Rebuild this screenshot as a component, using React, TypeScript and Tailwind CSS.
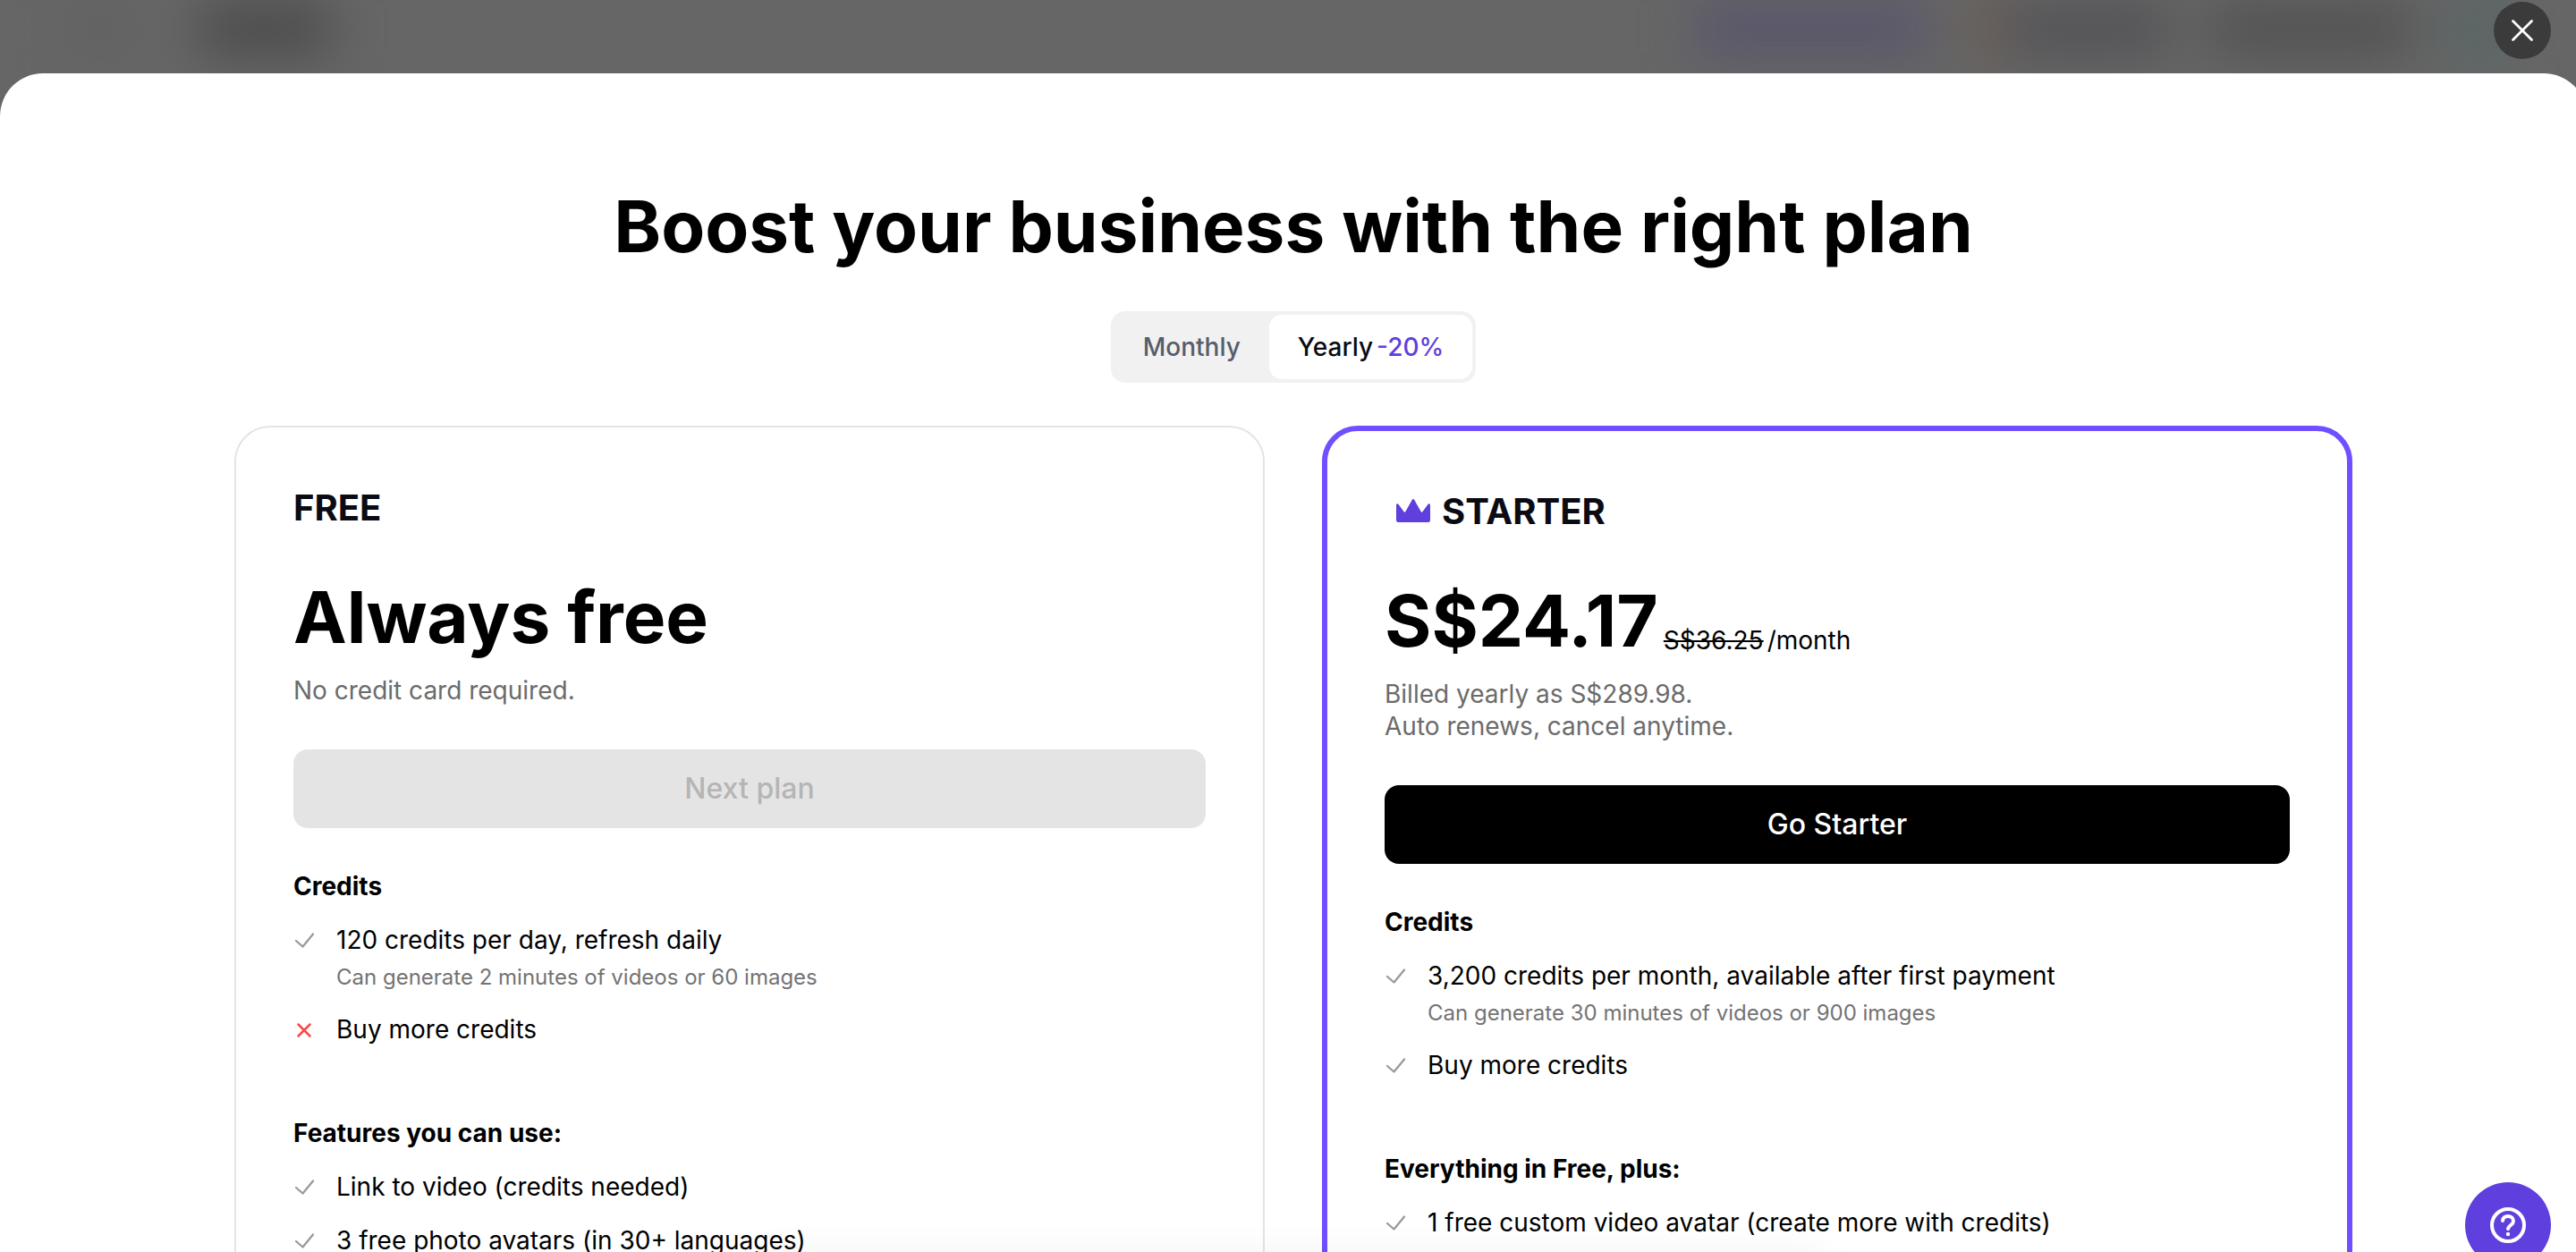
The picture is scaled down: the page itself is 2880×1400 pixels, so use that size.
import React, { useState } from 'react';
import clsx from 'clsx';

interface PlanItem {
    text: string;
    note?: string;
    included: boolean;
}

interface PlanSection {
    title: string;
    items: PlanItem[];
}

const FREE_SECTIONS: PlanSection[] = [
    {
        title: 'Credits',
        items: [
            { text: '120 credits per day, refresh daily', note: 'Can generate 2 minutes of videos or 60 images', included: true },
            { text: 'Buy more credits', included: false },
        ],
    },
    {
        title: 'Features you can use:',
        items: [
            { text: 'Link to video (credits needed)', included: true },
            { text: '3 free photo avatars (in 30+ languages)', included: true },
        ],
    },
];

const STARTER_SECTIONS: PlanSection[] = [
    {
        title: 'Credits',
        items: [
            { text: '3,200 credits per month, available after first payment', note: 'Can generate 30 minutes of videos or 900 images', included: true },
            { text: 'Buy more credits', included: true },
        ],
    },
    {
        title: 'Everything in Free, plus:',
        items: [
            { text: '1 free custom video avatar (create more with credits)', included: true },
        ],
    },
];

const CheckIcon = () => (
    <svg className="mt-1.5 size-6 shrink-0 text-[#999999]" viewBox="0 0 24 24" fill="none" stroke="currentColor" strokeWidth="2.3" strokeLinecap="round" strokeLinejoin="round" aria-hidden="true">
        <path d="M3 13L10.5 19.500L22 5.500" />
    </svg>
);

const CrossIcon = () => (
    <svg className="mt-1.5 size-6 shrink-0 text-[#ff4747]" viewBox="0 0 24 24" fill="none" stroke="currentColor" strokeWidth="2.5" strokeLinecap="round" aria-hidden="true">
        <path d="M5.5 6.500L18.500 19.500M18.500 6.500L5.500 19.500" />
    </svg>
);

const CrownIcon = () => (
    <svg className="size-12 shrink-0 text-[#5f3fdd]" viewBox="0 0 48 48" fill="currentColor" aria-hidden="true">
        <path d="M23 10.6c.5-.9 1.500-.9 2 0l7.600 13.400c.5.9 1.500.9 2 0l5.800-8c.8-1.300 2.600-.8 2.600.8V33.500a2.500 2.500 0 0 1-2.500 2.500h-33a2.500 2.500 0 0 1-2.500-2.500V16.800c0-1.600 1.800-2.100 2.600-.8l5.800 8c.5.9 1.500.9 2 0z" />
    </svg>
);

const SectionList = ({ sections }: { sections: PlanSection[] }) => (
    <div className="mt-[47px] flex flex-col gap-20">
        {sections.map((section) => (
            <section key={section.title}>
                <h3 className="text-[28px] leading-9 font-bold">{section.title}</h3>
                <ul className="mt-6 flex flex-col gap-6">
                    {section.items.map((item) => (
                        <li key={item.text} className="flex gap-6">
                            {item.included ? <CheckIcon /> : <CrossIcon />}
                            <div>
                                <p className="text-[28px] leading-9">{item.text}</p>
                                {item.note && <p className="mt-2 text-2xl leading-8 text-[#737373]">{item.note}</p>}
                            </div>
                        </li>
                    ))}
                </ul>
            </section>
        ))}
    </div>
);

// Whatever is left of the app's top bar behind the backdrop
const BlurredHeader = () => (
    <div className="flex h-16 items-center justify-between px-20 blur-[28px]" aria-hidden="true">
        <div className="flex items-center gap-20">
            <div className="h-12 w-16 bg-[#616161]" />
            <div className="h-14 w-36 bg-[#4a4a4a]" />
        </div>
        <div className="flex items-center gap-12">
            <div className="h-14 w-64 bg-[#58556c]" />
            <div className="flex">
                <div className="h-14 w-12 bg-[#6a5d55]" />
                <div className="h-14 w-44 bg-[#525256]" />
            </div>
            <div className="h-14 w-56 bg-[#515151]" />
            <div className="h-16 w-14 bg-[#566666]" />
        </div>
    </div>
);

const App: React.FC = () => {
    const [billing, setBilling] = useState<'monthly' | 'yearly'>('yearly');

    return (
        <div className="flex h-screen flex-col overflow-hidden bg-[#666666] font-[Inter,'Liberation_Sans',sans-serif] text-black">
            <div className="relative h-[82px] shrink-0">
                <BlurredHeader />
                <button aria-label="Close" className="absolute top-0.5 right-7 flex size-16 items-center justify-center rounded-full bg-[#3b3b3b] text-white">
                    <svg className="size-8" viewBox="0 0 32 32" fill="none" stroke="currentColor" strokeWidth="2.8" strokeLinecap="round" aria-hidden="true">
                        <path d="M5.500 5.500L26.500 26.500M26.500 5.500L5.500 26.500" />
                    </svg>
                </button>
            </div>

            <main role="dialog" aria-labelledby="pricing-title" className="relative -mr-3 flex-1 rounded-t-[48px] bg-white pt-[123px]">
                <h1 id="pricing-title" className="text-center text-[80px] leading-24 font-bold">Boost your business with the right plan</h1>

                <div className="mt-[47px] flex justify-center">
                    <div className="flex rounded-2xl bg-[#f1f1f1] p-1 text-[28px] leading-[72px] font-medium">
                        <button
                            onClick={() => setBilling('monthly')}
                            aria-pressed={billing === 'monthly'}
                            className={clsx('rounded-[14px] px-8', billing === 'monthly' ? 'bg-white text-[#0b0b14]' : 'text-[#575d69]')}
                        >
                            Monthly
                        </button>
                        <button
                            onClick={() => setBilling('yearly')}
                            aria-pressed={billing === 'yearly'}
                            className={clsx('rounded-[14px] px-8', billing === 'yearly' ? 'bg-white text-[#0b0b14]' : 'text-[#575d69]')}
                        >
                            Yearly<span className="ml-1 text-[#5f3fdd]">-20%</span>
                        </button>
                    </div>
                </div>

                <div className="mx-auto mt-12 grid max-w-[2368px] grid-cols-2 gap-16">
                    <article className="rounded-[40px] border-2 border-[#e4e4e4] p-16">
                        <h2 className="text-[40px] leading-13 font-bold text-[#0b0b14]">FREE</h2>
                        <p className="mt-12 text-[80px] leading-24 font-bold">Always free</p>
                        <p className="mt-4 text-[28px] leading-9 text-[#6b6b6b]">No credit card required.</p>
                        <button disabled className="mt-12 h-22 w-full rounded-2xl bg-[#e4e4e4] text-[32px] font-medium text-[#b5b5b5]">Next plan</button>
                        <SectionList sections={FREE_SECTIONS} />
                    </article>

                    <article className="rounded-[40px] border-6 border-[#6f4fff] p-16">
                        <div className="flex h-13 items-center gap-2 pl-2">
                            <CrownIcon />
                            <h2 className="text-[40px] leading-13 font-bold text-[#0b0b14]">STARTER</h2>
                        </div>
                        <p className="mt-12 flex items-end gap-1.5">
                            <span className="text-[80px] leading-24 font-bold">S$24.17</span>
                            <span className="pb-2 text-[28px] leading-9"><s>S$36.25</s><span className="ml-1">/month</span></span>
                        </p>
                        <p className="mt-4 text-[28px] leading-9 text-[#6b6b6b]">
                            Billed yearly as S$289.98.
                            <br />
                            Auto renews, cancel anytime.
                        </p>
                        <button className="mt-12 h-22 w-full rounded-2xl bg-black text-[32px] font-medium text-white">Go Starter</button>
                        <SectionList sections={STARTER_SECTIONS} />
                    </article>
                </div>
            </main>

            {/* Toast resting just below the window, only its shadow reaches in */}
            <div className="pointer-events-none fixed top-full left-1/2 h-16 w-[1200px] -translate-x-1/2 rounded-2xl shadow-[0_0_40px_rgba(0,0,0,0.05)]" />

            <button aria-label="Help" className="fixed right-7 -bottom-[18px] flex size-24 items-center justify-center rounded-full bg-[#5f3fdd] text-white">
                <svg className="size-12" viewBox="0 0 48 48" fill="none" stroke="currentColor" strokeWidth="4" strokeLinecap="round" strokeLinejoin="round" aria-hidden="true">
                    <circle cx="24" cy="24" r="18" />
                    <path d="M18 19c.4-3.300 2.900-5 6-5 3.400 0 6 2.200 6 5.400 0 4-5.200 4.900-6 8.600" />
                    <circle cx="24" cy="34" r="2.200" fill="currentColor" stroke="none" />
                </svg>
            </button>
        </div>
    );
};

export default App;
